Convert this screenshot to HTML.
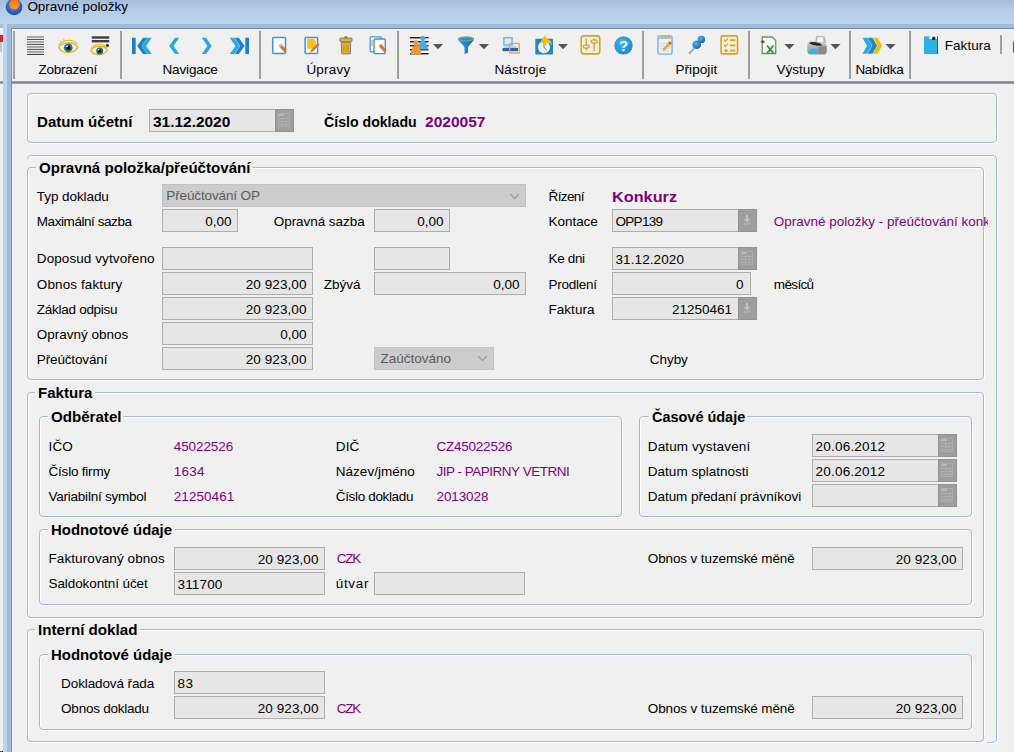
<!DOCTYPE html>
<html lang="cs"><head><meta charset="utf-8"><title>Opravné položky</title>
<style>
html,body{margin:0;padding:0}
body{width:1014px;height:752px;position:relative;overflow:hidden;background:#f0f0f0;font-family:"Liberation Sans",sans-serif;font-size:13px;color:#000}
.a{position:absolute}
.t{position:absolute;white-space:nowrap;line-height:16px;height:16px;font-size:13.5px}
.b{font-weight:bold;font-size:14px}
.p{color:#800080}
.gb{position:absolute;border:1px solid #a0bad6;border-radius:4px;box-shadow:inset 1px 1px 0 #fff,1px 1px 0 #fff;box-sizing:border-box}
.gt{position:absolute;white-space:nowrap;line-height:16px;height:16px;font-weight:bold;background:#f0f0f0;padding:0 2px 0 3px;font-size:14px}
.in{position:absolute;box-sizing:border-box;border:1px solid #adadad;background:#e6e6e6}
.btn{position:absolute;box-sizing:border-box;background:#9e9e9e;border:1px solid #929292}
.sep{position:absolute;width:2px;background:linear-gradient(90deg,#a6a6a6,#989898)}
.ic{position:absolute;overflow:visible}
</style></head>
<body>
<div class="a" style="left:0;top:0;width:1014px;height:29px;background:linear-gradient(#a3bddc 0,#b3cbe8 9px,#bdd4ee 23px)"></div>
<div class="a" style="left:0;top:24px;width:3px;height:728px;background:#a4bfde"></div>
<div class="a" style="left:0;top:28px;width:3px;height:724px;background:#f0f0f0"></div>
<div class="a" style="left:0;top:35px;width:3px;height:7px;background:#d42828"></div>
<div class="a" style="left:0;top:42px;width:2px;height:10px;background:#b8c8dc"></div>
<div class="a" style="left:0;top:81px;width:3px;height:3px;background:linear-gradient(#b5b5b5,#7b7f86 50%,#b9bcc0)"></div>
<div class="a" style="left:3px;top:24px;width:4px;height:728px;background:#bcd3ed"></div>
<div class="a" style="left:7px;top:24px;width:1007px;height:5px;background:#9fbbdb"></div>
<div class="a" style="left:7px;top:24px;width:5px;height:728px;background:#9fbbdb"></div>
<div class="a" style="left:11px;top:28px;width:1003px;height:1px;background:#7d8898"></div>
<div class="a" style="left:11px;top:28px;width:1px;height:724px;background:#8491a2"></div>
<div class="a" style="left:12px;top:29px;width:1002px;height:723px;background:#f0f0f0"></div>
<div class="a" style="left:0;top:751px;width:1px;height:1px;background:#f00"></div><div class="a" style="left:1px;top:751px;width:1px;height:1px;background:#0c0"></div><div class="a" style="left:2px;top:751px;width:1px;height:1px;background:#00f"></div>
<svg class="ic" style="left:4px;top:0" width="22" height="18" viewBox="0 0 22 18"><defs><radialGradient id="gb1" cx="0.45" cy="0.4" r="0.7"><stop offset="0" stop-color="#4d9be6"/><stop offset="1" stop-color="#0a3da0"/></radialGradient><radialGradient id="go1" cx="0.5" cy="0.7" r="0.7"><stop offset="0" stop-color="#ffa030"/><stop offset="1" stop-color="#f26a10"/></radialGradient></defs><circle cx="10" cy="7" r="8.3" fill="url(#gb1)"/><circle cx="10.500" cy="4.200" r="5.400" fill="url(#go1)"/></svg>
<span class="t " style="top:-1px;left:27.4px;letter-spacing:-0.054px;">Opravné položky</span>
<div class="a" style="left:12px;top:81px;width:1002px;height:3px;background:linear-gradient(#a9adb4,#7d838f 40%,#7d838f 72%,#c4c7cb)"></div>
<div class="sep" style="left:13px;top:31px;height:48px"></div>
<div class="sep" style="left:120px;top:31px;height:48px"></div>
<div class="sep" style="left:259px;top:31px;height:48px"></div>
<div class="sep" style="left:397px;top:31px;height:48px"></div>
<div class="sep" style="left:642px;top:31px;height:48px"></div>
<div class="sep" style="left:748px;top:31px;height:48px"></div>
<div class="sep" style="left:849px;top:31px;height:48px"></div>
<div class="sep" style="left:909px;top:31px;height:48px"></div>
<div class="sep" style="left:1000px;top:35px;height:19px"></div>
<span class="t " style="top:61.5px;left:38.4px;letter-spacing:-0.233px;">Zobrazení</span>
<span class="t " style="top:61.5px;left:162.4px;letter-spacing:-0.123px;">Navigace</span>
<span class="t " style="top:61.5px;left:306.4px;letter-spacing:0.206px;">Úpravy</span>
<span class="t " style="top:61.5px;left:494.4px;letter-spacing:0.215px;">Nástroje</span>
<span class="t " style="top:61.5px;left:675.4px;letter-spacing:0.092px;">Připojit</span>
<span class="t " style="top:61.5px;left:776.4px;letter-spacing:0.038px;">Výstupy</span>
<span class="t " style="top:61.5px;left:855.4px;letter-spacing:-0.328px;">Nabídka</span>
<span class="t " style="top:37.5px;left:944.8px;letter-spacing:0.031px;">Faktura</span>
<svg class="ic" style="left:0;top:0" width="1014" height="90" viewBox="0 0 1014 90">
<defs>
<linearGradient id="lgB" x1="0" y1="0" x2="0" y2="1"><stop offset="0" stop-color="#2fb0e8"/><stop offset="1" stop-color="#1b86c6"/></linearGradient>
<linearGradient id="lgF" x1="0" y1="0" x2="1" y2="0"><stop offset="0" stop-color="#39a6e0"/><stop offset="0.5" stop-color="#1f86c8"/><stop offset="1" stop-color="#1668a8"/></linearGradient>
<radialGradient id="rgH" cx="0.4" cy="0.35" r="0.75"><stop offset="0" stop-color="#45b4ea"/><stop offset="1" stop-color="#1b84c4"/></radialGradient>
<radialGradient id="rgP" cx="0.4" cy="0.35" r="0.75"><stop offset="0" stop-color="#5ab4f0"/><stop offset="1" stop-color="#0f5aa0"/></radialGradient>
<linearGradient id="lgPr" x1="0" y1="0" x2="0" y2="1"><stop offset="0" stop-color="#b0b0b0"/><stop offset="1" stop-color="#505050"/></linearGradient>
<linearGradient id="lgPr2" x1="0" y1="0" x2="0" y2="1"><stop offset="0" stop-color="#d2d2d2"/><stop offset="1" stop-color="#8e8e8e"/></linearGradient>
</defs>
<!-- Zobrazeni: lines -->
<g fill="#6e6e6e">
<rect x="27" y="36.4" width="17" height="1.1"/><rect x="27" y="38.9" width="17" height="1.1" fill="#555"/><rect x="27" y="41.4" width="17" height="1.1"/><rect x="27" y="43.9" width="17" height="1.1" fill="#555"/><rect x="27" y="46.4" width="17" height="1.1"/><rect x="27" y="48.9" width="17" height="1.1" fill="#555"/><rect x="27" y="51.4" width="17" height="1.1"/><rect x="27" y="53.9" width="17" height="1.1" fill="#444"/>
</g>
<!-- eye -->
<g id="eye1">
<path d="M58.5 47.5C62 41.5 74 41 77.8 47.2C74 54 62.500 54.500 58.500 47.500Z" fill="#f4ecd8" stroke="#e4b21c" stroke-width="1.3"/>
<path d="M58.500 45.500C62 39.500 73 38.500 77.500 44" fill="none" stroke="#e8bc28" stroke-width="1.3"/>
<path d="M63 40.500L64.500 38M61 42L60 40" stroke="#e8bc28" stroke-width="0.8" fill="none"/>
<circle cx="68.300" cy="47.800" r="4.300" fill="#19709c"/>
<circle cx="68.300" cy="47.800" r="2.100" fill="#0a0a12"/>
<circle cx="67" cy="46.300" r="0.900" fill="#fff"/>
</g>
<!-- eye with lines -->
<rect x="91.800" y="36.300" width="17.400" height="2.400" fill="#3c3c3c"/>
<rect x="91.800" y="40" width="17.400" height="2.400" fill="#3c3c3c"/>
<circle cx="107.400" cy="45.400" r="1.500" fill="#222"/>
<g>
<path d="M90.800 50.600C94 45.200 104 44.800 107.600 50.200C104 55.800 94 56 90.800 50.600Z" fill="#f4ecd8" stroke="#e4b21c" stroke-width="1.200"/>
<path d="M91 48.800C94 43.800 103 43.300 107 47.500" fill="none" stroke="#e8bc28" stroke-width="1.200"/>
<circle cx="99.700" cy="50.900" r="3.500" fill="#19709c"/>
<circle cx="99.700" cy="50.900" r="1.700" fill="#0a0a12"/>
<circle cx="98.700" cy="49.700" r="0.700" fill="#fff"/>
</g>
<!-- Navigace -->
<rect x="132" y="37.700" width="3.700" height="16.400" fill="#1d82c4"/>
<path d="M143 37.700h4.200l-5.600 8.200 5.600 8.200h-4.200l-5.800-8.200z" fill="#1d82c4"/>
<path d="M147.500 37.700h4.200l-5.600 8.200 5.600 8.200h-4.200l-5.800-8.200z" fill="#2aa8e4"/>
<path d="M175 37.700h4.200l-5.600 8.200 5.600 8.200h-4.200l-5.800-8.200z" fill="#2aa8e4"/>
<path d="M206 37.700h-4.200l5.600 8.200-5.600 8.200h4.200l5.800-8.200z" fill="#2aa8e4"/>
<path d="M234 37.700h-4.200l5.600 8.200-5.600 8.200h4.200l5.800-8.200z" fill="#2aa8e4"/>
<path d="M238.800 37.700h-4.200l5.600 8.200-5.600 8.200h4.200l5.800-8.200z" fill="#1d82c4"/>
<rect x="245.300" y="37.700" width="3.700" height="16.400" fill="#1d82c4"/>
<!-- Upravy: new doc -->
<rect x="272.700" y="37.400" width="12.800" height="16" rx="1" fill="#fff" stroke="#3b94d6" stroke-width="1.500"/>
<path d="M279 45l2.300-1 5.600 6.300-2.100 2.100-5.300-5.500z" fill="#e0702a"/>
<path d="M279.300 45.300l1.800-.8.600 1.800-1.800.8z" fill="#f0c090"/>
<!-- edit doc -->
<rect x="305.100" y="37.400" width="12.500" height="16" rx="1" fill="#fff" stroke="#3b94d6" stroke-width="1.500"/>
<path d="M307 38.800h6.500l2.400 2.400v5.800l-4 1.800h-4.900z" fill="#f7c31c"/>
<path d="M318 43l1.600 1.700-6.700 6.700-2.700 1 .9-2.600z" fill="#e0702a"/>
<!-- trash -->
<rect x="344.300" y="36.300" width="3.200" height="2" fill="#6c7a8c"/>
<rect x="339.800" y="38" width="12.300" height="3.600" rx="1" fill="#e6b022" stroke="#6c7a8c" stroke-width="0.900"/>
<path d="M341.200 42.600h9.600l-.5 11.300h-8.600z" fill="#ecb824" stroke="#6c7a8c" stroke-width="0.900"/>
<path d="M343.800 44.500v8M346 44.500v8M348.200 44.500v8" stroke="#b8881a" stroke-width="0.900"/>
<!-- copy doc -->
<rect x="370.200" y="36.900" width="11" height="15" rx="1" fill="#fff" stroke="#4a9cda" stroke-width="1.300"/>
<rect x="371" y="40" width="2" height="6" fill="#f7d060"/>
<rect x="374" y="39" width="11.300" height="14.600" rx="1" fill="#fff" stroke="#3b94d6" stroke-width="1.400"/>
<path d="M379 45l2.300-1 5.300 6.300-2.100 2.100-5-5.500z" fill="#e0702a"/>
<!-- Nastroje: persons -->
<g fill="#1a1a1a"><rect x="410" y="37" width="18.500" height="1.400"/><rect x="410" y="41" width="18.500" height="1.400"/><rect x="410" y="45" width="18.500" height="1.400"/><rect x="410" y="49" width="18.500" height="1.400"/><rect x="410" y="53" width="18.500" height="1.400"/></g>
<circle cx="422.800" cy="38.300" r="2.500" fill="#4dace0"/>
<path d="M422.800 40c2.500 0 5.200 6 5.200 9.500h-10.400c0-3.500 2.700-9.500 5.200-9.500z" fill="#4dace0"/>
<circle cx="416" cy="42.800" r="2.500" fill="#f6952a"/>
<path d="M416 44.500c2.500 0 5.200 6 5.200 9.700h-10.400c0-3.700 2.700-9.700 5.200-9.700z" fill="#f6952a"/>
<path d="M433 44h10l-5 5.200z" fill="#555"/>
<!-- funnel -->
<path d="M458 39c0-3.400 16-3.400 16 0c0 2-4.500 5.600-6 8.200v5.500l-3.500 1.300v-6.800c-1.500-2.600-6.500-6.200-6.500-8.200z" fill="url(#lgF)"/>
<ellipse cx="466" cy="39" rx="7.500" ry="1.800" fill="#2a8fd0" stroke="#c8a838" stroke-width="0.700"/>
<path d="M478.800 44h10.200l-5.100 5.200z" fill="#555"/>
<!-- windows -->
<rect x="503.900" y="37.700" width="8.200" height="7.200" fill="#dcecfa" stroke="#6cb2ea" stroke-width="1.400"/>
<rect x="502.500" y="48" width="15.500" height="3.200" fill="#2f62b2"/>
<rect x="503.500" y="46" width="13" height="2" fill="#b8d0ee"/>
<rect x="509.700" y="43.500" width="9.500" height="9.500" fill="none" stroke="#e8a05c" stroke-width="1.400"/>
<!-- clock -->
<rect x="535.300" y="38.700" width="17.700" height="15.700" rx="1" fill="#2088c8"/>
<circle cx="544" cy="47.200" r="6" fill="#f4f4f4"/>
<path d="M544 43.500v4l2.600 2.400" stroke="#667" stroke-width="1" fill="none"/>
<path d="M540.400 42.600L544.700 35.300L547.900 39.400C550.600 39.800 552.300 42.300 551.700 45.400C550.300 43 548.300 42.400 545.800 43.200L546.600 45.800L543.300 43.600Z" fill="#f7bb14"/>
<path d="M558 44h10l-5 5.200z" fill="#555"/>
<!-- sliders -->
<rect x="581.200" y="35.900" width="18.600" height="18" rx="2.600" fill="#f3efe6" stroke="#d9a21e" stroke-width="1.600"/>
<path d="M586.300 38.500v7M586.300 48v2.500M594.200 38.500v1.500M594.200 43.500v7.500" stroke="#d9a21e" stroke-width="1.300"/>
<ellipse cx="586.300" cy="46.500" rx="3" ry="1.700" fill="none" stroke="#d9a21e" stroke-width="1.200"/>
<ellipse cx="594.200" cy="41.600" rx="3" ry="1.700" fill="none" stroke="#d9a21e" stroke-width="1.200"/>
<!-- help -->
<circle cx="623.500" cy="45.400" r="9.200" fill="url(#rgH)"/>
<text x="623.500" y="50.800" text-anchor="middle" font-family="Liberation Sans, sans-serif" font-weight="bold" font-size="15" fill="#fff">?</text>
<!-- Pripojit: notepad -->
<rect x="657.900" y="36" width="14.200" height="18.100" rx="1.600" fill="#e6f1fc" stroke="#78b0e4" stroke-width="1.400"/>
<rect x="658.600" y="36.300" width="12.800" height="2.600" fill="#9cc4ec"/>
<path d="M662.500 35.500v3.200M665.500 35.500v3.200M668.500 35.500v3.200" stroke="#d8b040" stroke-width="1.100"/>
<path d="M660 43.500h10M660 46h10M660 48.500h10M660 51h10" stroke="#c0d8f2" stroke-width="0.700"/>
<path d="M669.600 41.200L671.800 43.300L665 50.200L662.900 50.900L663.200 48.200Z" fill="#f2a81e"/>
<path d="M669.600 41.200L671.800 43.300L670.500 44.600L668.300 42.500Z" fill="#c04a34"/>
<!-- pin -->
<path d="M693.600 49L689.500 53.200" stroke="#9a9a9a" stroke-width="1.700" stroke-linecap="round"/>
<path d="M698.500 42L700 43.500" stroke="#0f5aa0" stroke-width="4.500"/>
<circle cx="696.700" cy="44.800" r="4.300" fill="url(#rgP)"/>
<circle cx="701.400" cy="39.400" r="3.700" fill="url(#rgP)"/>
<!-- checklist -->
<rect x="721.100" y="35.900" width="16.400" height="18" rx="1.800" fill="#f5efe0" stroke="#d9a21e" stroke-width="1.600"/>
<g stroke="#d9a21e" stroke-width="1.300" fill="none"><path d="M724 39.800l1.500 1.500 2.400-2.800M724 45l1.500 1.500 2.400-2.800"/></g>
<circle cx="726" cy="50.600" r="1.600" fill="#d9a21e"/>
<g fill="#d9a21e"><rect x="730" y="39.200" width="5.300" height="1.800"/><rect x="730" y="44.500" width="5.300" height="1.800"/><rect x="730" y="49.700" width="5.300" height="1.800"/></g>
<!-- Vystupy: excel -->
<path d="M762.200 37h10l3.500 3.500v13h-13.500z" fill="#fff" stroke="#55a455" stroke-width="1.300"/>
<path d="M767 45.500l6.500 7.800M773.500 45.500l-6.500 7.800" stroke="#3c8f3c" stroke-width="1.900"/>
<rect x="761" y="40.600" width="3.600" height="2.400" rx="0.800" fill="#d82030"/>
<path d="M784.300 44h10.200l-5.100 5.200z" fill="#555"/>
<!-- printer -->
<path d="M814.800 43L816.400 35.800L825 36.400L826.200 43Z" fill="#b4b6c2"/>
<path d="M816.900 42.800L817.700 37.300L823 37.600L823.500 42.800Z" fill="#fbfbfb"/>
<path d="M807.300 45C807.300 42.500 809 41 811 41L823 42C825.500 42.300 826.600 44 826.600 46L826.600 51.500C826.600 53 826 54 824.500 54.200L811 54.400C808.500 54.400 807.300 53 807.300 51Z" fill="url(#lgPr2)"/>
<path d="M818.500 47L826.600 46L826.600 52L824.500 54.200L818.500 54.300Z" fill="#8a8a8a"/>
<path d="M809 43C812 41 819 42.500 822.500 45.200C819 46.600 811 45 809 43Z" fill="#262626"/>
<path d="M812.300 48.300L818.400 49.400L815.300 54.200L807.900 52.600Z" fill="#2fb6e6"/>
<path d="M830.400 44h10.200l-5.100 5.200z" fill="#555"/>
<!-- Nabidka chevrons -->
<path d="M862.400 37.700h4.800l4.700 8-4.700 8h-4.800l4.700-8z" fill="#2aa8e4"/>
<path d="M867.600 37.700h4.800l4.700 8-4.700 8h-4.800l4.700-8z" fill="#1f88c8"/>
<path d="M872.700 37.700h4.800l4.700 8-4.700 8h-4.800l4.700-8z" fill="#f6ba14"/>
<path d="M885.400 44h10.200l-5.100 5.200z" fill="#555"/>
<!-- Faktura icon -->
<rect x="924" y="36.400" width="13" height="17.700" fill="#2fb0e2"/>
<rect x="929.500" y="36.400" width="7.500" height="2.600" fill="#fff"/>
<rect x="937" y="36.400" width="1" height="17.700" fill="#4a5560"/>
<circle cx="933.700" cy="38.400" r="1.700" fill="#111"/>
<!-- red thing at right edge -->
<rect x="1013" y="41.500" width="1.500" height="11" fill="#d82020"/>
</svg>

<div class="gb" style="left:27px;top:93px;width:970px;height:50px"></div>
<span class="t b" style="top:113.5px;left:36.5px;transform:scaleX(1.0768);transform-origin:left center;">Datum účetní</span>
<div class="in" style="left:149px;top:109px;width:145px;height:23px"></div>
<div class="btn" style="left:275px;top:109px;width:19px;height:23px"></div>
<svg class="ic" style="left:278px;top:113px" width="12" height="14" viewBox="0 0 12 14"><rect x="0.5" y="0.5" width="11" height="13" fill="none" stroke="#adadad"/><rect x="1" y="1" width="5" height="2" fill="#b8b8b8"/><path d="M1 5.5h10M1 8.5h10M1 11.5h10M4.5 4v9M8 4v9" stroke="#adadad" fill="none"/></svg>
<span class="t b" style="top:113.5px;left:152.5px;transform:scaleX(1.1031);transform-origin:left center;">31.12.2020</span>
<span class="t b" style="top:113.5px;left:323.8px;transform:scaleX(1.0098);transform-origin:left center;">Číslo dokladu</span>
<span class="t b p" style="top:113.5px;left:425.3px;transform:scaleX(1.1098);transform-origin:left center;">2020057</span>
<div class="gb" style="left:27px;top:155px;width:970px;height:588px"></div>
<div class="a" style="left:27px;top:159px;width:3px;height:586px;background:#f0f0f0"></div>
<div class="a" style="left:27px;top:739px;width:960px;height:6px;background:#f0f0f0"></div>
<div class="gb" style="left:27px;top:167px;width:957px;height:213px"></div>
<span class="gt" style="left:35.5px;top:160px;transform:scaleX(1.0787);transform-origin:3px center;">Opravná položka/přeúčtování</span>
<span class="t " style="top:189px;left:36.8px;letter-spacing:-0.074px;">Typ dokladu</span>
<div class="in" style="left:162px;top:184px;width:364px;height:23px;background:#cccccc;border-color:#c2c2c2"></div>
<span class="t " style="top:188px;left:166.3px;letter-spacing:-0.129px;color:#5a5a5a;">Přeúčtování OP</span>
<svg class="ic" style="left:509px;top:193px" width="11" height="7" viewBox="0 0 11 7"><path d="M1 1L5.500 5.500L10 1" stroke="#9a9a9a" fill="none" stroke-width="1.100"/></svg>
<span class="t " style="top:214px;left:36.8px;letter-spacing:-0.433px;">Maximální sazba</span>
<div class="in" style="left:162px;top:209px;width:76px;height:23px"></div>
<span class="t " style="top:213.5px;right:782.5px;letter-spacing:-0.02px;">0,00</span>
<span class="t " style="top:214px;left:273.8px;letter-spacing:-0.059px;">Opravná sazba</span>
<div class="in" style="left:374px;top:209px;width:76px;height:23px"></div>
<span class="t " style="top:213.5px;right:570.5px;letter-spacing:-0.02px;">0,00</span>
<span class="t " style="top:251px;left:36.8px;letter-spacing:0.087px;">Doposud vytvořeno</span>
<div class="in" style="left:162px;top:247px;width:151px;height:23px"></div>
<div class="in" style="left:374px;top:247px;width:76px;height:23px"></div>
<span class="t " style="top:276.5px;left:36.8px;letter-spacing:0.112px;">Obnos faktury</span>
<div class="in" style="left:162px;top:272px;width:151px;height:23px"></div>
<span class="t " style="top:276.5px;right:707.5px;letter-spacing:0.082px;">20 923,00</span>
<span class="t " style="top:276.5px;left:323.8px;letter-spacing:0.007px;">Zbývá</span>
<div class="in" style="left:374px;top:272px;width:152px;height:23px"></div>
<span class="t " style="top:276.5px;right:494.5px;letter-spacing:-0.02px;">0,00</span>
<span class="t " style="top:301.5px;left:36.8px;letter-spacing:-0.274px;">Základ odpisu</span>
<div class="in" style="left:162px;top:297px;width:151px;height:23px"></div>
<span class="t " style="top:301.5px;right:707.5px;letter-spacing:0.082px;">20 923,00</span>
<span class="t " style="top:326.5px;left:36.8px;letter-spacing:-0.005px;">Opravný obnos</span>
<div class="in" style="left:162px;top:322px;width:151px;height:23px"></div>
<span class="t " style="top:326.5px;right:707.5px;letter-spacing:-0.02px;">0,00</span>
<span class="t " style="top:351.5px;left:36.8px;letter-spacing:-0.141px;">Přeúčtování</span>
<div class="in" style="left:162px;top:347px;width:151px;height:23px"></div>
<span class="t " style="top:351.5px;right:707.5px;letter-spacing:0.082px;">20 923,00</span>
<div class="in" style="left:374px;top:347px;width:120px;height:23px;background:#cccccc;border-color:#c2c2c2"></div>
<span class="t " style="top:350.5px;left:380.5px;letter-spacing:-0.005px;color:#5a5a5a;">Zaúčtováno</span>
<svg class="ic" style="left:477px;top:355px" width="11" height="7" viewBox="0 0 11 7"><path d="M1 1L5.500 5.500L10 1" stroke="#9a9a9a" fill="none" stroke-width="1.100"/></svg>
<span class="t " style="top:189px;left:548.5px;letter-spacing:-0.622px;">Řízení</span>
<span class="t b p" style="top:189px;left:612.3px;transform:scaleX(1.0484);transform-origin:left center;font-size:15.5px;">Konkurz</span>
<span class="t " style="top:214px;left:548.5px;letter-spacing:-0.035px;">Kontace</span>
<div class="in" style="left:612px;top:209px;width:145px;height:23px"></div>
<div class="btn" style="left:738px;top:209px;width:19px;height:23px"></div>
<svg class="ic" style="left:743px;top:215px" width="8" height="10" viewBox="0 0 8 10"><path d="M3 0h2v4h2.5L4 7.5 0.5 4H3z" fill="#c2c2c2"/><rect x="0.5" y="8.5" width="7" height="1" fill="#c2c2c2"/></svg>
<span class="t " style="top:213.5px;left:615.5px;letter-spacing:-0.708px;">OPP139</span>
<span class="t p" style="top:214px;left:773.8px;width:214px;overflow:hidden;">Opravné položky - přeúčtování konk</span>
<span class="t " style="top:251px;left:548.5px;letter-spacing:-0.347px;">Ke dni</span>
<div class="in" style="left:612px;top:247px;width:145px;height:23px"></div>
<div class="btn" style="left:738px;top:247px;width:19px;height:23px"></div>
<svg class="ic" style="left:741px;top:251px" width="12" height="14" viewBox="0 0 12 14"><rect x="0.5" y="0.5" width="11" height="13" fill="none" stroke="#adadad"/><rect x="1" y="1" width="5" height="2" fill="#b8b8b8"/><path d="M1 5.5h10M1 8.5h10M1 11.5h10M4.5 4v9M8 4v9" stroke="#adadad" fill="none"/></svg>
<span class="t " style="top:251.5px;left:615.5px;letter-spacing:0.092px;">31.12.2020</span>
<span class="t " style="top:276.5px;left:548.5px;letter-spacing:-0.262px;">Prodlení</span>
<div class="in" style="left:612px;top:272px;width:139px;height:23px"></div>
<span class="t " style="top:276.5px;right:270.5px;">0</span>
<span class="t " style="top:276.5px;left:773.8px;letter-spacing:-0.636px;">měsíců</span>
<span class="t " style="top:301.5px;left:548.5px;letter-spacing:0.031px;">Faktura</span>
<div class="in" style="left:612px;top:297px;width:145px;height:23px"></div>
<div class="btn" style="left:738px;top:297px;width:19px;height:23px"></div>
<svg class="ic" style="left:743px;top:303px" width="8" height="10" viewBox="0 0 8 10"><path d="M3 0h2v4h2.5L4 7.5 0.5 4H3z" fill="#c2c2c2"/><rect x="0.5" y="8.5" width="7" height="1" fill="#c2c2c2"/></svg>
<span class="t " style="top:301.5px;right:282.0px;letter-spacing:-0.01px;">21250461</span>
<span class="t " style="top:351.5px;left:649.8px;letter-spacing:-0.053px;">Chyby</span>
<div class="gb" style="left:27px;top:392px;width:957px;height:226px"></div>
<span class="gt" style="left:34.5px;top:385px;transform:scaleX(1.0775);transform-origin:3px center;">Faktura</span>
<div class="gb" style="left:39px;top:416px;width:583px;height:101px"></div>
<span class="gt" style="left:47.5px;top:409px;transform:scaleX(1.0787);transform-origin:3px center;">Odběratel</span>
<span class="t " style="top:439px;left:48.5px;letter-spacing:0.161px;">IČO</span>
<span class="t p" style="top:439px;left:173.8px;letter-spacing:-0.097px;">45022526</span>
<span class="t " style="top:439px;left:335.8px;letter-spacing:0.083px;">DIČ</span>
<span class="t p" style="top:439px;left:436.5px;letter-spacing:-0.236px;">CZ45022526</span>
<span class="t " style="top:463.5px;left:48.5px;letter-spacing:-0.205px;">Číslo firmy</span>
<span class="t p" style="top:463.5px;left:173.8px;letter-spacing:0.238px;">1634</span>
<span class="t " style="top:463.5px;left:335.8px;letter-spacing:0.018px;">Název/jméno</span>
<span class="t p" style="top:463.5px;left:436.5px;letter-spacing:-0.492px;">JIP - PAPIRNY VETRNI</span>
<span class="t " style="top:489px;left:48.5px;letter-spacing:-0.235px;">Variabilní symbol</span>
<span class="t p" style="top:489px;left:173.8px;letter-spacing:0.053px;">21250461</span>
<span class="t " style="top:489px;left:335.8px;letter-spacing:-0.347px;">Číslo dokladu</span>
<span class="t p" style="top:489px;left:436.5px;letter-spacing:-0.109px;">2013028</span>
<div class="gb" style="left:639px;top:416px;width:333px;height:101px"></div>
<span class="gt" style="left:648.5px;top:409px;transform:scaleX(1.0325);transform-origin:3px center;">Časové údaje</span>
<span class="t " style="top:439px;left:647.8px;letter-spacing:0.13px;">Datum vystavení</span>
<div class="in" style="left:812px;top:434px;width:145px;height:23px"></div>
<div class="btn" style="left:938px;top:434px;width:19px;height:23px"></div>
<svg class="ic" style="left:941px;top:438px" width="12" height="14" viewBox="0 0 12 14"><rect x="0.5" y="0.5" width="11" height="13" fill="none" stroke="#adadad"/><rect x="1" y="1" width="5" height="2" fill="#b8b8b8"/><path d="M1 5.5h10M1 8.5h10M1 11.5h10M4.5 4v9M8 4v9" stroke="#adadad" fill="none"/></svg>
<span class="t " style="top:438.5px;left:815.5px;letter-spacing:0.222px;">20.06.2012</span>
<span class="t " style="top:463.5px;left:647.8px;letter-spacing:0.016px;">Datum splatnosti</span>
<div class="in" style="left:812px;top:459px;width:145px;height:23px"></div>
<div class="btn" style="left:938px;top:459px;width:19px;height:23px"></div>
<svg class="ic" style="left:941px;top:463px" width="12" height="14" viewBox="0 0 12 14"><rect x="0.5" y="0.5" width="11" height="13" fill="none" stroke="#adadad"/><rect x="1" y="1" width="5" height="2" fill="#b8b8b8"/><path d="M1 5.5h10M1 8.5h10M1 11.5h10M4.5 4v9M8 4v9" stroke="#adadad" fill="none"/></svg>
<span class="t " style="top:463.5px;left:815.5px;letter-spacing:0.222px;">20.06.2012</span>
<span class="t " style="top:489px;left:647.8px;letter-spacing:-0.053px;">Datum předaní právníkovi</span>
<div class="in" style="left:812px;top:484px;width:145px;height:23px"></div>
<div class="btn" style="left:938px;top:484px;width:19px;height:23px"></div>
<svg class="ic" style="left:941px;top:488px" width="12" height="14" viewBox="0 0 12 14"><rect x="0.5" y="0.5" width="11" height="13" fill="none" stroke="#adadad"/><rect x="1" y="1" width="5" height="2" fill="#b8b8b8"/><path d="M1 5.5h10M1 8.5h10M1 11.5h10M4.5 4v9M8 4v9" stroke="#adadad" fill="none"/></svg>
<div class="gb" style="left:39px;top:529px;width:933px;height:76px"></div>
<span class="gt" style="left:47.5px;top:522px;transform:scaleX(1.0655);transform-origin:3px center;">Hodnotové údaje</span>
<span class="t " style="top:551px;left:48.5px;letter-spacing:0.087px;">Fakturovaný obnos</span>
<div class="in" style="left:174px;top:547px;width:151px;height:23px"></div>
<span class="t " style="top:551.5px;right:695.5px;letter-spacing:0.082px;">20 923,00</span>
<span class="t p" style="top:551px;left:336.8px;letter-spacing:-1.233px;">CZK</span>
<span class="t " style="top:576px;left:48.5px;letter-spacing:-0.086px;">Saldokontní účet</span>
<div class="in" style="left:174px;top:572px;width:151px;height:23px"></div>
<span class="t " style="top:576.5px;left:177.5px;letter-spacing:0.159px;">311700</span>
<span class="t " style="top:576px;left:335.8px;letter-spacing:0.657px;">útvar</span>
<div class="in" style="left:374px;top:572px;width:151px;height:23px"></div>
<span class="t " style="top:551px;left:647.8px;letter-spacing:-0.12px;">Obnos v tuzemské měně</span>
<div class="in" style="left:812px;top:547px;width:151px;height:23px"></div>
<span class="t " style="top:551.5px;right:57.5px;letter-spacing:0.082px;">20 923,00</span>
<div class="gb" style="left:27px;top:629px;width:957px;height:113px"></div>
<span class="gt" style="left:35.0px;top:622px;transform:scaleX(1.0839);transform-origin:3px center;">Interní doklad</span>
<div class="gb" style="left:39px;top:654px;width:933px;height:76px"></div>
<span class="gt" style="left:47.5px;top:647px;transform:scaleX(1.0655);transform-origin:3px center;">Hodnotové údaje</span>
<span class="t " style="top:676px;left:61.1px;letter-spacing:-0.112px;">Dokladová řada</span>
<div class="in" style="left:174px;top:671px;width:151px;height:23px"></div>
<span class="t " style="top:676.0px;left:177.5px;letter-spacing:0.484px;">83</span>
<span class="t " style="top:701px;left:61.1px;letter-spacing:-0.233px;">Obnos dokladu</span>
<div class="in" style="left:174px;top:696px;width:151px;height:23px"></div>
<span class="t " style="top:701.0px;right:695.5px;letter-spacing:0.082px;">20 923,00</span>
<span class="t p" style="top:701px;left:336.8px;letter-spacing:-1.233px;">CZK</span>
<span class="t " style="top:701px;left:647.8px;letter-spacing:-0.12px;">Obnos v tuzemské měně</span>
<div class="in" style="left:812px;top:696px;width:151px;height:23px"></div>
<span class="t " style="top:701.0px;right:57.5px;letter-spacing:0.082px;">20 923,00</span>
</body></html>
